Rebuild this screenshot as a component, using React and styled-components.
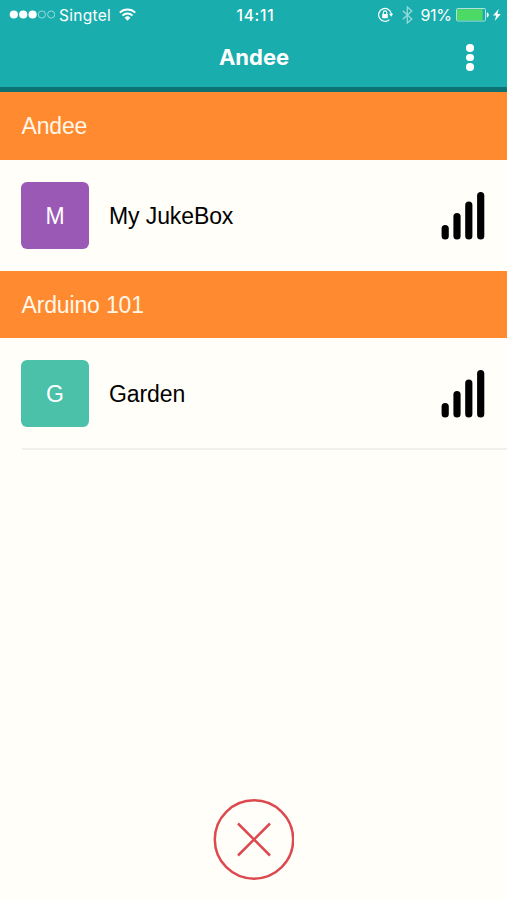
import React from "react";
import styled, { createGlobalStyle } from "styled-components";

const GlobalStyle = createGlobalStyle`
  body {
    margin: 0;
    background-color: #fffef9;
  }
`;

const Screen = styled.div`
  box-sizing: border-box;
  display: flex;
  flex-direction: column;
  height: 900px;
  overflow: hidden;
  background-color: #fffef9;
  font-family: "Liberation Sans", Arial, sans-serif;
`;

const Header = styled.header`
  box-sizing: border-box;
  flex: none;
  height: 92px;
  border-bottom: 5px solid #0f7273;
  background-color: #19adad;
  color: #fff;
`;

const StatusBar = styled.div`
  display: grid;
  grid-template-columns: 1fr auto 1fr;
  align-items: center;
  height: 30px;
  padding: 0 6px 0 9px;
  font-family: Inter, sans-serif;
  font-size: 16px;
`;

const StatusGroup = styled.div`
  display: flex;
  align-items: center;
  justify-content: ${props => (props.$end ? "flex-end" : "flex-start")};

  svg {
    display: block;
    flex: none;
  }
`;

const Carrier = styled.span`
  margin: 0 7.5px 0 4px;
  font-size: 15.5px;
  letter-spacing: 0.3px;
`;

const Clock = styled.span`
  padding-left: 1px;
  font-size: 15.5px;
  font-weight: 500;
  letter-spacing: 0.8px;
`;

const Percent = styled.span`
  margin: 0 4px 0 8px;
  font-size: 16px;
  letter-spacing: -0.4px;
`;

const NavBar = styled.div`
  display: grid;
  grid-template-columns: 1fr auto 1fr;
  align-items: center;
  height: 54px;
  padding: 0 33.5px;
`;

const Title = styled.h1`
  grid-column: 2;
  margin: 0;
  padding-left: 1px;
  font-family: Inter, sans-serif;
  font-size: 22px;
  font-weight: 700;
  line-height: 55px;
`;

const MenuButton = styled.button`
  display: flex;
  flex-direction: column;
  justify-self: end;
  gap: 2px;
  padding: 0;
  border: 0;
  background: none;
`;

const MenuDot = styled.span`
  width: 7.5px;
  height: 7.5px;
  border-radius: 50%;
  background-color: #fff;
`;

const SectionTitle = styled.h2`
  box-sizing: border-box;
  flex: none;
  height: ${props => props.$height}px;
  margin: 0;
  padding-left: 21.5px;
  background-color: #ff8a2f;
  color: #fff8ea;
  font-size: 23px;
  font-weight: 400;
  letter-spacing: -0.15px;
  line-height: 69px;
`;

const Row = styled.div`
  display: flex;
  align-items: center;
  box-sizing: border-box;
  flex: none;
  height: 111px;
  padding: 0 22.5px 0 21.3px;
`;

const Avatar = styled.div`
  width: 67.4px;
  height: 67.4px;
  border-radius: 6px;
  background-color: ${props => props.$color};
  color: #fff;
  font-size: 23px;
  line-height: 69px;
  text-align: center;
`;

const Name = styled.span`
  flex: 1;
  margin-left: 20.3px;
  color: #000;
  font-size: 23px;
  letter-spacing: -0.1px;
  line-height: 28px;
`;

const Divider = styled.div`
  flex: none;
  height: 2px;
  margin: -1px 0 0 21.5px;
  background-color: #f0f0ec;
`;

const Footer = styled.footer`
  display: flex;
  justify-content: center;
  margin-top: auto;
  padding-bottom: 20px;
`;

const CloseButton = styled.button`
  padding: 0;
  border: 0;
  background: none;

  svg {
    display: block;
  }
`;

const SignalDots = () => (
  <svg width="46" height="10" viewBox="0 0 46 10">
    <g fill="#fff">
      <circle cx="4.8" cy="4.5" r="4.1" />
      <circle cx="14.2" cy="4.5" r="4.1" />
      <circle cx="23.6" cy="4.5" r="4.1" />
    </g>
    <g fill="none" stroke="#fff" strokeOpacity="0.55">
      <circle cx="32.9" cy="4.5" r="3.6" />
      <circle cx="42.2" cy="4.5" r="3.6" />
    </g>
  </svg>
);

const WifiIcon = () => (
  <svg width="17" height="15" viewBox="0 0 17 15">
    <g fill="none" stroke="#fff" strokeWidth="2">
      <path d="M.8 4.6a11 11 0 0 1 15.4 0" />
      <path d="M3.5 7.6a7.1 7.1 0 0 1 10 0" />
    </g>
    <path d="M5.6 9.8a4.1 4.1 0 0 1 5.8 0L8.5 12.7z" fill="#fff" />
  </svg>
);

const RotationLockIcon = () => (
  <svg width="15" height="16" viewBox="0 0 15 16">
    <path
      d="M11.4 12.6A6.4 6.4 0 1 1 13.4 7"
      fill="none"
      stroke="#fff"
      strokeWidth="1.2"
    />
    <path d="M11 6.8h4.2L13.2 9.8z" fill="#fff" />
    <rect x="4.2" y="7" width="5.6" height="4.2" rx="0.4" fill="#fff" />
    <path
      d="M5.3 7.4V5.6a1.7 1.7 0 0 1 3.4 0v1.8"
      fill="none"
      stroke="#fff"
      strokeWidth="1.1"
    />
  </svg>
);

const BluetoothIcon = () => (
  <svg width="11" height="18" viewBox="0 0 11 18">
    <path
      d="M.8 4.8l9 8.2-4.5 4V1l4.5 4-9 8.2"
      fill="none"
      stroke="#fff"
      strokeOpacity="0.55"
      strokeWidth="1.3"
    />
  </svg>
);

const BatteryIcon = () => (
  <svg width="33" height="14" viewBox="0 0 33 14">
    <rect
      x="0.5"
      y="0.5"
      width="29"
      height="12.5"
      rx="1.2"
      fill="none"
      stroke="#fff"
      strokeOpacity="0.65"
    />
    <rect x="1" y="1.2" width="25.6" height="11.2" fill="#4cd964" />
    <path d="M30.8 4.3c2.6 1 2.6 4.2 0 5.2z" fill="#fff" />
  </svg>
);

const BoltIcon = () => (
  <svg width="8" height="12" viewBox="0 0 8 12">
    <path d="M5.7 0L0 6.6h3.2L1.8 12 7.8 5H4.5z" fill="#fff" />
  </svg>
);

const SignalIcon = () => (
  <svg width="44" height="48" viewBox="0 0 44 48">
    <g stroke="#000" strokeWidth="7.2" strokeLinecap="round">
      <path d="M4.2 36.6v7.4" />
      <path d="M16 24.7v19.3" />
      <path d="M27.8 13v31" />
      <path d="M39.7 3.6v40.4" />
    </g>
  </svg>
);

const CloseIcon = () => (
  <svg width="81" height="81" viewBox="0 0 81 81">
    <g fill="none" stroke="#dc4a50" strokeWidth="2.5">
      <circle cx="41" cy="40.5" r="39.2" />
      <path d="M25 24.5l32 32M57 24.5l-32 32" />
    </g>
  </svg>
);

const Device = ({ letter, color, name }) => (
  <Row>
    <Avatar $color={color}>{letter}</Avatar>
    <Name>{name}</Name>
    <SignalIcon />
  </Row>
);

export default () => (
  <Screen>
    <GlobalStyle />
    <Header>
      <StatusBar>
        <StatusGroup>
          <SignalDots />
          <Carrier>Singtel</Carrier>
          <WifiIcon />
        </StatusGroup>
        <Clock>14:11</Clock>
        <StatusGroup $end>
          <RotationLockIcon />
          <span>&nbsp;&nbsp;</span>
          <BluetoothIcon />
          <Percent>91%</Percent>
          <BatteryIcon />
          <span>&nbsp;</span>
          <BoltIcon />
        </StatusGroup>
      </StatusBar>
      <NavBar>
        <Title>Andee</Title>
        <MenuButton aria-label="Menu">
          <MenuDot />
          <MenuDot />
          <MenuDot />
        </MenuButton>
      </NavBar>
    </Header>
    <SectionTitle $height={68}>Andee</SectionTitle>
    <Device letter="M" color="#9b59b6" name="My JukeBox" />
    <SectionTitle $height={67}>Arduino 101</SectionTitle>
    <Device letter="G" color="#4bc1aa" name="Garden" />
    <Divider />
    <Footer>
      <CloseButton aria-label="Close">
        <CloseIcon />
      </CloseButton>
    </Footer>
  </Screen>
);
